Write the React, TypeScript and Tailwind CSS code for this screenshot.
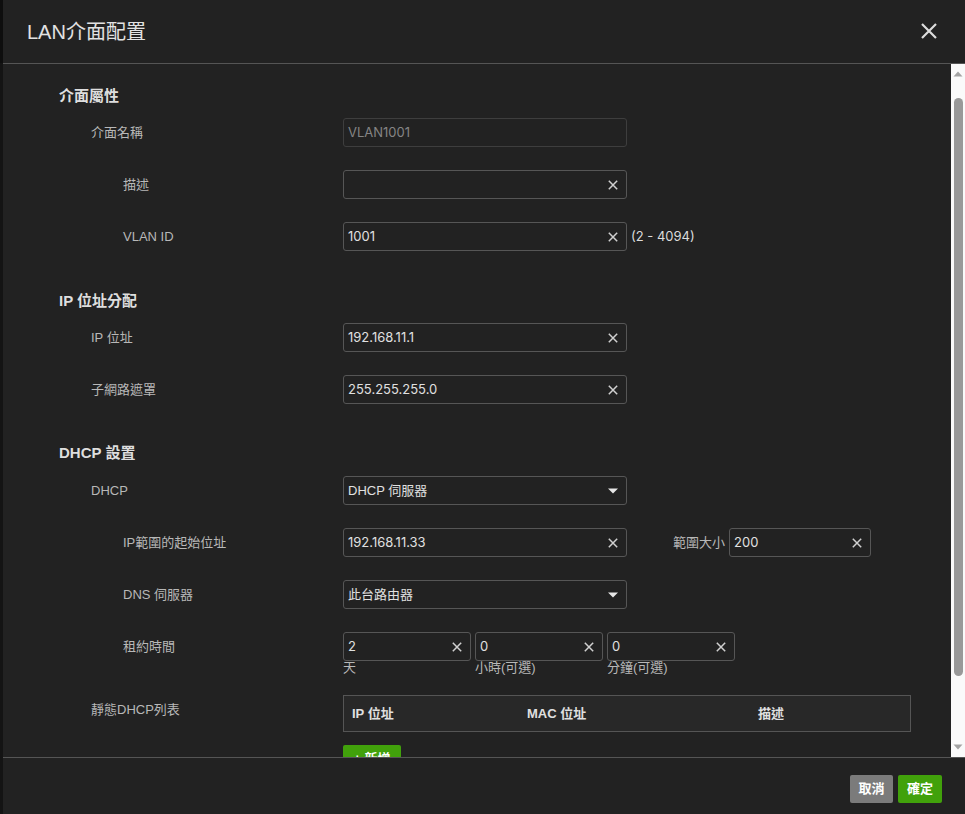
import React from "react";

const latin = { fontFamily: '"Liberation Sans", "Noto Sans CJK TC", sans-serif' };
const inter = { fontFamily: 'Inter, "Noto Sans CJK TC", sans-serif' };

function ClearX() {
  return (
    <svg width="10" height="10" viewBox="0 0 10 10" className="shrink-0">
      <path d="M0.8 0.8 L9.2 9.2 M9.2 0.8 L0.8 9.2" stroke="#d0d0d0" strokeWidth="1.5" fill="none" />
    </svg>
  );
}

function Caret() {
  return (
    <svg width="10" height="6" viewBox="0 0 10 6" className="shrink-0">
      <path d="M0 0.5 L10 0.5 L5 5.5 Z" fill="#e6e6e6" />
    </svg>
  );
}

function Input({ value, w = "w-[284px]", disabled = false }: { value: string; w?: string; disabled?: boolean }) {
  return (
    <div
      className={`${w} h-[29px] rounded-[3px] border ${disabled ? "border-[#3e3e3e]" : "border-[#565656]"} bg-[#222222] flex items-center pl-[4px] pr-[8px]`}
    >
      <span className={`flex-1 text-[13px] ${disabled ? "text-[#858585]" : "text-[#e0e0e0]"}`} style={inter}>
        {value}
      </span>
      {!disabled && <ClearX />}
    </div>
  );
}

function Select({ value }: { value: string }) {
  return (
    <div className="w-[284px] h-[29px] rounded-[3px] border border-[#565656] bg-[#222222] flex items-center pl-[4px] pr-[8px]">
      <span className="flex-1 text-[13px] text-[#e0e0e0]" style={latin}>
        {value}
      </span>
      <Caret />
    </div>
  );
}

function Row({ label, indent, children }: { label: string; indent: 1 | 2; children: React.ReactNode }) {
  return (
    <div className="flex items-start">
      <div
        className={`w-[284px] h-[29px] flex items-center text-[13px] text-[#b8b8b8] ${indent === 1 ? "pl-[32px]" : "pl-[64px]"}`}
        style={latin}
      >
        {label}
      </div>
      {children}
    </div>
  );
}

function Heading({ children, className = "" }: { children: React.ReactNode; className?: string }) {
  return (
    <div className={`h-[20px] flex items-center text-[15px] font-bold text-[#dedede] ${className}`} style={latin}>
      {children}
    </div>
  );
}

export default function App() {
  return (
    <div className="w-[965px] h-[814px] flex bg-[#151515] overflow-hidden">
      <div className="w-[3px] h-full bg-[#141414] flex flex-col">
        <div className="h-[63px] bg-[#0e0e0e]" />
      </div>
      <div className="flex-1 h-full bg-[#222222] flex flex-col">
        {/* Header */}
        <div className="h-[64px] shrink-0 border-b border-[#555555] flex items-center pl-[24px] pr-[28px]">
          <div className="flex-1 text-[20px] text-[#e2e2e2]" style={latin}>
            LAN介面配置
          </div>
          <svg width="16" height="16" viewBox="0 0 16 16" className="mb-[1px]">
            <path d="M1 1 L15 15 M15 1 L1 15" stroke="#dcdcdc" strokeWidth="2.2" fill="none" />
          </svg>
        </div>

        {/* Body */}
        <div className="h-[693px] shrink-0 flex">
          <div className="flex-1 overflow-hidden pl-[56px] pt-[22px]">
            <Heading>介面屬性</Heading>
            <div className="mt-[12px] flex flex-col gap-[23px]">
              <Row label="介面名稱" indent={1}>
                <Input value="VLAN1001" disabled />
              </Row>
              <Row label="描述" indent={2}>
                <Input value="" />
              </Row>
              <Row label="VLAN ID" indent={2}>
                <Input value="1001" />
                <span className="ml-[4px] h-[29px] flex items-center text-[13px] text-[#dcdcdc]" style={inter}>
                  (2 - 4094)
                </span>
              </Row>
            </div>

            <Heading className="mt-[40px]">IP 位址分配</Heading>
            <div className="mt-[12px] flex flex-col gap-[23px]">
              <Row label="IP 位址" indent={1}>
                <Input value="192.168.11.1" />
              </Row>
              <Row label="子網路遮罩" indent={1}>
                <Input value="255.255.255.0" />
              </Row>
            </div>

            <Heading className="mt-[39px]">DHCP 設置</Heading>
            <div className="mt-[13px] flex flex-col gap-[23px]">
              <Row label="DHCP" indent={1}>
                <Select value="DHCP 伺服器" />
              </Row>
              <Row label="IP範圍的起始位址" indent={2}>
                <Input value="192.168.11.33" />
                <span className="ml-[46px] h-[29px] flex items-center text-[13px] text-[#b8b8b8]" style={latin}>
                  範圍大小
                </span>
                <div className="ml-[4px]">
                  <Input value="200" w="w-[142px]" />
                </div>
              </Row>
              <Row label="DNS 伺服器" indent={2}>
                <Select value="此台路由器" />
              </Row>
              <Row label="租約時間" indent={2}>
                <div className="flex gap-[4px]">
                  {[
                    ["2", "天"],
                    ["0", "小時(可選)"],
                    ["0", "分鐘(可選)"],
                  ].map(([v, l], i) => (
                    <div key={i} className="flex flex-col">
                      <Input value={v} w="w-[128px]" />
                      <span className="text-[13px] leading-[16px] text-[#b8b8b8] -mt-[1px]" style={latin}>
                        {l}
                      </span>
                    </div>
                  ))}
                </div>
              </Row>
            </div>

            <div className="mt-[19px] flex items-start">
              <div className="w-[284px] pl-[32px] h-[30px] flex items-center text-[13px] text-[#b8b8b8]" style={latin}>
                靜態DHCP列表
              </div>
              <div className="flex flex-col">
                <div className="w-[568px] h-[37px] border border-[#555555] bg-[#282828] flex items-center text-[13px] font-bold text-[#e0e0e0]" style={latin}>
                  <div className="w-[175px] pl-[8px]">IP 位址</div>
                  <div className="w-[231px] pl-[8px]">MAC 位址</div>
                  <div className="pl-[8px]">描述</div>
                </div>
                <div className="mt-[13px] w-[58px] h-[28px] rounded-[2px] bg-[#41a10b] flex items-center justify-center text-[13px] font-bold text-white" style={latin}>
                  + 新增
                </div>
              </div>
            </div>
          </div>

          {/* Scrollbar */}
          <div className="w-[14px] h-full bg-[#fafafa] flex flex-col items-center">
            <svg width="10" height="6" viewBox="0 0 10 6" className="mt-[7px]">
              <path d="M5 0.5 L9.5 5.5 L0.5 5.5 Z" fill="#a3a3a3" />
            </svg>
            <div className="mt-[21px] w-[9px] h-[578px] rounded-[5px] bg-[#999999]" />
            <div className="flex-1" />
            <svg width="10" height="6" viewBox="0 0 10 6" className="mb-[7px]">
              <path d="M0.5 0.5 L9.5 0.5 L5 5.5 Z" fill="#a3a3a3" />
            </svg>
          </div>
        </div>

        {/* Footer */}
        <div className="flex-1 border-t border-[#555555] flex items-start justify-end pt-[17px] pr-[23px] gap-[5px]">
          <div className="w-[43px] h-[28px] rounded-[2px] bg-[#7b7b7b] flex items-center justify-center text-[13px] font-bold text-white" style={latin}>
            取消
          </div>
          <div className="w-[44px] h-[28px] rounded-[2px] bg-[#41a10b] flex items-center justify-center text-[13px] font-bold text-white" style={latin}>
            確定
          </div>
        </div>
      </div>
    </div>
  );
}
